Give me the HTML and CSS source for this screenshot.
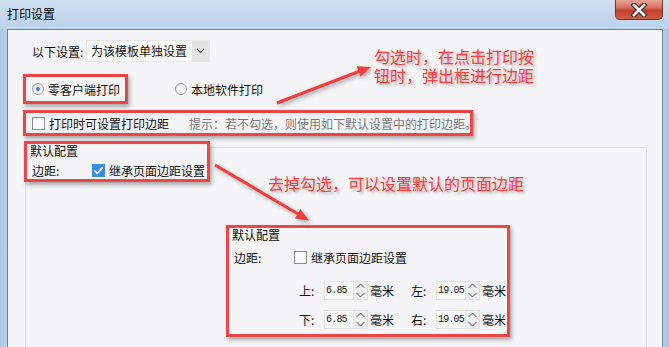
FILE: index.html
```html
<!DOCTYPE html>
<html lang="zh-CN">
<head>
  <meta charset="UTF-8" />
  <title>打印设置</title>
  <link rel="stylesheet" href="styles.css">
</head>
<body>

<div class="window">
  <div class="titlebar">
    <span class="title">打印设置</span>
    <span class="close">
      <svg width="20" height="14" viewBox="0 0 20 14">
        <path d="M5 2 L15 12 M15 2 L5 12" stroke="#4a2a25" stroke-width="5" stroke-linecap="square"/>
        <path d="M5 2 L15 12 M15 2 L5 12" stroke="#fff" stroke-width="2.6" stroke-linecap="square"/>
      </svg>
    </span>
  </div>

  <div class="client">
    <div class="row-scope">
      <span class="label">以下设置:</span>
      <div class="select">
        <span class="select-text">为该模板单独设置</span>
        <span class="caret">
          <svg width="9" height="6" viewBox="0 0 9 6"><path d="M1 1 L4.5 4.5 L8 1" fill="none" stroke="#444" stroke-width="1.2"/></svg>
        </span>
      </div>
    </div>

    <div class="row-mode">
      <div class="mark mark-mode"><span class="radio on"></span>零客户端打印</div>
      <div class="opt"><span class="radio"></span>本地软件打印</div>
    </div>

    <div class="mark mark-margin">
      <span class="check"></span>
      <span>打印时可设置打印边距</span>
      <span class="hint">提示：若不勾选，则使用如下默认设置中的打印边距。</span>
    </div>

    <div class="group">
      <div class="mark mark-default">
        <div class="legend">默认配置</div>
        <div class="field">
          <span class="field-label">边距:</span>
          <span class="check on">
            <svg width="13" height="13" viewBox="0 0 13 13"><path d="M2.5 6.5 L5.3 9.5 L10.8 3" fill="none" stroke="#fff" stroke-width="1.8"/></svg>
          </span>
          <span>继承页面边距设置</span>
        </div>
      </div>

      <div class="mark mark-sub">
        <div class="legend">默认配置</div>
        <div class="field">
          <span class="field-label">边距:</span>
          <span class="check"></span>
          <span>继承页面边距设置</span>
        </div>
        <div class="spin-row">
          <span class="spin-label">上:</span>
          <span class="spin"><span class="spin-value">6.85</span><span class="spin-btn"></span></span>
          <span class="unit">毫米</span>
          <span class="spin-label second">左:</span>
          <span class="spin"><span class="spin-value">19.05</span><span class="spin-btn"></span></span>
          <span class="unit">毫米</span>
        </div>
        <div class="spin-row">
          <span class="spin-label">下:</span>
          <span class="spin"><span class="spin-value">6.85</span><span class="spin-btn"></span></span>
          <span class="unit">毫米</span>
          <span class="spin-label second">右:</span>
          <span class="spin"><span class="spin-value">19.05</span><span class="spin-btn"></span></span>
          <span class="unit">毫米</span>
        </div>
      </div>
    </div>
  </div>

  <!-- annotations drawn over the dialog -->
  <div class="note note-check">
    <div class="note-line">勾选时，在点击打印按</div>
    <div class="note-line">钮时，弹出框进行边距</div>
  </div>
  <div class="note note-default">去掉勾选，可以设置默认的页面边距</div>

  <svg class="arrows" width="669" height="347" viewBox="0 0 669 347">
    <line x1="277" y1="103" x2="360" y2="71" stroke="#f23c3c" stroke-width="3"/>
    <polygon points="371,67 360.6,76.5 356.6,66.2" fill="#f23c3c"/>
    <line x1="215" y1="165" x2="299" y2="214.5" stroke="#f23c3c" stroke-width="3"/>
    <polygon points="309,220.5 295,218.6 300.4,209.2" fill="#f23c3c"/>
  </svg>
</div>

</body>
</html>
```

FILE: styles.css
```css
body {
  margin: 0;
  font-family: "Noto Sans CJK SC", "Noto Sans", sans-serif;
  font-size: 12px;
  color: #111;
  background: #fff;
}

.window {
  position: relative;
  width: 669px;
  height: 347px;
  overflow: hidden;
  background: linear-gradient(90deg, #a9c6e6 0, #c8dcf1 2%, #bed3ec 50%, #c6daf0 98%, #a9c6e6 100%);
}

.titlebar {
  height: 29px;
  display: flex;
  justify-content: space-between;
  align-items: flex-start;
  background: linear-gradient(180deg, #cfe0f3 0, #c2d7ee 60%, #bcd2eb 100%);
}

.title {
  padding-left: 7px;
  line-height: 28px;
  color: #000;
}

.close {
  width: 46px;
  height: 19px;
  margin-right: 6px;
  display: flex;
  align-items: center;
  justify-content: center;
  border: 1px solid #7a3128;
  border-top: none;
  border-radius: 0 0 5px 5px;
  background: linear-gradient(180deg, #e9a597 0, #d6705f 40%, #c0402f 55%, #d05b46 100%);
}

.client {
  height: 330px;
  margin: 0 6px 0 7px;
  padding-top: 10px;
  border: 1px solid #6f7f96;
  background: #f5f5f7;
  box-sizing: border-box;
  white-space: nowrap;
}

/* scope select */
.row-scope {
  height: 22px;
  display: flex;
  align-items: center;
  padding-left: 24px;
}

.label {
  width: 54px;
}

.select {
  width: 124px;
  height: 22px;
  display: flex;
  background: #fff;
  box-sizing: border-box;
  border: 1px solid #e6e6e6;
}

.select-text {
  flex: 1;
  line-height: 20px;
  padding-left: 4px;
}

.caret {
  width: 17px;
  display: flex;
  align-items: center;
  justify-content: center;
  background: #e3e3e3;
}

/* red call-out boxes */
.mark {
  border: 3px solid #f04545;
  box-sizing: border-box;
  box-shadow: 2px 3px 4px rgba(0,0,0,0.3);
}

.row-mode {
  margin-top: 12px;
  margin-left: 15px;
  height: 30px;
  display: flex;
  align-items: center;
}

.mark-mode {
  width: 105px;
  height: 30px;
  padding-left: 6px;
  display: flex;
  align-items: center;
}

.opt {
  margin-left: 47px;
  display: flex;
  align-items: center;
}

.radio {
  flex-shrink: 0;
  width: 12px;
  height: 12px;
  margin-right: 4px;
  border: 1px solid #9a9a9a;
  border-radius: 50%;
  box-sizing: border-box;
  background: linear-gradient(135deg, #e8e8e8, #fff);
  display: flex;
  align-items: center;
  justify-content: center;
}

.radio.on::after {
  content: "";
  width: 4px;
  height: 4px;
  border-radius: 50%;
  background: #2f86e8;
}

.check {
  flex-shrink: 0;
  width: 13px;
  height: 13px;
  margin-right: 4px;
  border: 1px solid #8e8e8e;
  box-sizing: border-box;
  background: #fafafa;
  display: flex;
}

.check.on {
  border: none;
  background: #3b8ee3;
}

.mark-margin {
  margin-top: 6px;
  margin-left: 15px;
  width: 450px;
  height: 26px;
  padding-left: 6px;
  display: flex;
  align-items: center;
}

.hint {
  margin-left: 20px;
  color: #7a7a7a;
}

/* default settings group */
.group {
  margin-top: 11px;
  margin-left: 17px;
  width: 620px;
  height: 200px;
  border: 1px solid #e0e0e2;
  border-radius: 2px;
}

.legend {
  height: 14px;
  line-height: 14px;
  padding-left: 3px;
}

.field {
  height: 20px;
  display: flex;
  align-items: center;
  padding-left: 5px;
}

.field-label {
  width: 60px;
}

.mark-default {
  margin-top: -7px;
  margin-left: -2px;
  width: 186px;
  height: 41px;
  background: #f5f5f7;
}

.mark-default .field {
  margin-top: 2px;
}

.mark-sub {
  margin-top: 43px;
  margin-left: 200px;
  width: 284px;
  height: 112px;
}

.mark-sub .field {
  margin-top: 5px;
}

.spin-row {
  height: 20px;
  margin-top: 13px;
  padding-left: 70px;
  display: flex;
  align-items: center;
}

.spin-row + .spin-row {
  margin-top: 9px;
}

.spin-label {
  width: 25px;
}

.spin-label.second {
  margin-left: 17px;
}

.spin {
  height: 19px;
  display: flex;
  border: 1px solid #e2e2e2;
  box-sizing: border-box;
  background: #fff;
}

.spin-value {
  width: 28px;
  padding-left: 1px;
  box-sizing: border-box;
  font-family: "Liberation Mono", monospace;
  font-size: 10px;
  letter-spacing: -0.8px;
  line-height: 17px;
}

.spin-btn {
  width: 13px;
  background:
    url("data:image/svg+xml,%3Csvg xmlns='http://www.w3.org/2000/svg' width='13' height='17'%3E%3Cpath d='M2.5 6 L6.5 2 L10.5 6 M2.5 11 L6.5 15 L10.5 11' fill='none' stroke='%23555' stroke-width='1'/%3E%3C/svg%3E") no-repeat center,
    #f0f0f0;
  border-left: 1px solid #e2e2e2;
}

.unit {
  margin-left: 2px;
}

/* annotations */
.note {
  position: absolute;
  color: #ff3a3a;
  font-size: 16px;
  line-height: 19px;
  white-space: nowrap;
  text-shadow: 2px 2px 3px rgba(0,0,0,0.3);
}

.note-line {
  height: 19px;
}

.note-check {
  left: 374px;
  top: 47px;
}

.note-default {
  left: 268px;
  top: 174px;
}

.arrows {
  position: absolute;
  left: 0;
  top: 0;
  filter: drop-shadow(2px 2px 2px rgba(0,0,0,0.35));
}
```
